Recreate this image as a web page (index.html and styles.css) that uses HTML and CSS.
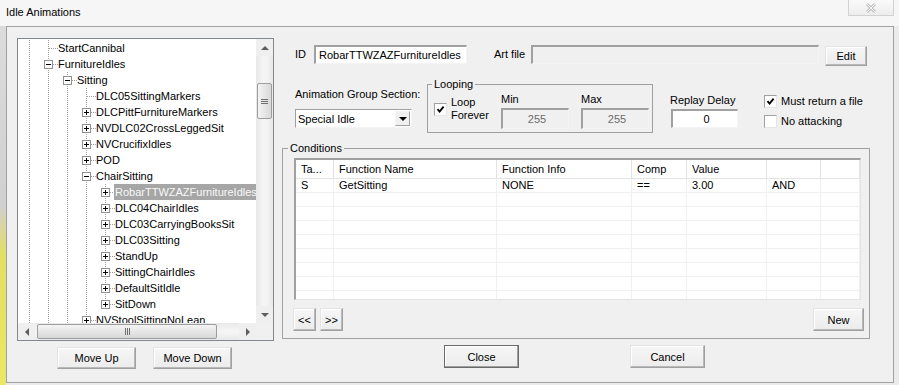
FILE: index.html
```html
<!DOCTYPE html>
<html lang="en">
<head>
    <meta charset="UTF-8">
    <title>Idle Animations</title>
    <link rel="stylesheet" href="styles.css">
</head>
<body>
    <div class="titlebar">
        <span class="title">Idle Animations</span>
        <span class="win-close">
            <svg width="12" height="10" viewBox="0 0 12 10">
                <path d="M2 1 L10 9 M10 1 L2 9" stroke="#c4c4c4" stroke-width="3" fill="none"/>
                <path d="M2 1 L10 9 M10 1 L2 9" stroke="#f6f6f6" stroke-width="1" fill="none"/>
            </svg>
        </span>
    </div>

    <div class="frame">
        <div class="left-col">
            <div class="tree">
                <div class="tree-view" id="tree">
                    <!-- tree nodes are generated below -->
                </div>
                <div class="vscroll">
                    <div class="sb-btn"><span class="arr up"></span></div>
                    <div class="sb-track">
                        <div class="thumb v-thumb"><span class="grip-v"></span></div>
                    </div>
                    <div class="sb-btn"><span class="arr down"></span></div>
                </div>
                <div class="hscroll">
                    <div class="sb-btn"><span class="arr left"></span></div>
                    <div class="sb-track">
                        <div class="thumb h-thumb"><span class="grip-h"></span></div>
                    </div>
                    <div class="sb-btn"><span class="arr right"></span></div>
                </div>
                <div class="sb-corner"></div>
            </div>
            <div class="move-row">
                <button class="btn move-btn">Move Up</button>
                <button class="btn move-btn">Move Down</button>
            </div>
        </div>

        <div class="right-col">
            <div class="id-row">
                <label class="lbl-id">ID</label>
                <input class="field id-field" type="text" value="RobarTTWZAZFurnitureIdles">
                <label class="lbl-art">Art file</label>
                <input class="field art-field" type="text" disabled>
                <button class="btn edit-btn">Edit</button>
            </div>

            <div class="opts-row">
                <div class="anim-group">
                    <div class="lbl">Animation Group Section:</div>
                    <div class="combo">
                        <span class="combo-text">Special Idle</span>
                        <span class="combo-btn"><span class="arr down black"></span></span>
                    </div>
                </div>

                <fieldset class="group looping">
                    <legend>Looping</legend>
                    <div class="loop-body">
                        <div class="loop-check">
                            <span class="check">
                                <svg width="9" height="9" viewBox="0 0 9 9"><path d="M1.5 4.2 L3.6 6.6 L7.6 1.6" fill="none" stroke="#000" stroke-width="1.8"/></svg>
                            </span>
                            <span class="lbl">Loop<br>Forever</span>
                        </div>
                        <div class="range">
                            <div class="lbl">Min</div>
                            <input class="field num-field" type="text" value="255" disabled>
                        </div>
                        <div class="range max">
                            <div class="lbl">Max</div>
                            <input class="field num-field" type="text" value="255" disabled>
                        </div>
                    </div>
                </fieldset>

                <div class="replay">
                    <div class="lbl">Replay Delay</div>
                    <input class="field replay-field" type="text" value="0">
                </div>

                <div class="flags">
                    <div class="flag">
                        <span class="check">
                            <svg width="9" height="9" viewBox="0 0 9 9"><path d="M1.5 4.2 L3.6 6.6 L7.6 1.6" fill="none" stroke="#000" stroke-width="1.8"/></svg>
                        </span>
                        Must return a file
                    </div>
                    <div class="flag">
                        <span class="check"></span>
                        No attacking
                    </div>
                </div>
            </div>

            <fieldset class="group conditions">
                <legend>Conditions</legend>
                <div class="list">
                    <div class="lv-head">
                        <span>Ta...</span>
                        <span>Function Name</span>
                        <span>Function Info</span>
                        <span>Comp</span>
                        <span>Value</span>
                        <span></span>
                        <span></span>
                    </div>
                    <div id="rows"></div>
                </div>
                <div class="list-btns">
                    <button class="btn nav-btn">&lt;&lt;</button>
                    <button class="btn nav-btn">&gt;&gt;</button>
                    <button class="btn new-btn">New</button>
                </div>
            </fieldset>

            <div class="dlg-btns">
                <button class="btn default-btn">Close</button>
                <button class="btn">Cancel</button>
            </div>
        </div>
    </div>

    <script>
        const nodes = [
            { depth: 1, name: "StartCannibal" },
            { depth: 1, name: "FurnitureIdles", box: "minus" },
            { depth: 2, name: "Sitting", box: "minus" },
            { depth: 3, name: "DLC05SittingMarkers" },
            { depth: 3, name: "DLCPittFurnitureMarkers", box: "plus" },
            { depth: 3, name: "NVDLC02CrossLeggedSit", box: "plus" },
            { depth: 3, name: "NVCrucifixIdles", box: "plus" },
            { depth: 3, name: "POD", box: "plus" },
            { depth: 3, name: "ChairSitting", box: "minus" },
            { depth: 4, name: "RobarTTWZAZFurnitureIdles", box: "plus", selected: true },
            { depth: 4, name: "DLC04ChairIdles", box: "plus" },
            { depth: 4, name: "DLC03CarryingBooksSit", box: "plus" },
            { depth: 4, name: "DLC03Sitting", box: "plus" },
            { depth: 4, name: "StandUp", box: "plus" },
            { depth: 4, name: "SittingChairIdles", box: "plus" },
            { depth: 4, name: "DefaultSitIdle", box: "plus" },
            { depth: 4, name: "SitDown", box: "plus", last: true },
            { depth: 3, name: "NVStoolSittingNoLean", box: "plus" }
        ];

        const conditions = [
            ["S", "GetSitting", "NONE", "==", "3.00", "AND", ""]
        ];

        const tree = document.getElementById("tree");
        nodes.forEach(node => {
            const row = document.createElement("div");
            row.className = "node";
            let html = "";
            for (let i = 0; i < node.depth; i++) {
                html += '<span class="guide"></span>';
            }
            html += `<span class="exp${node.last ? " last" : ""}">${node.box ? `<span class="box ${node.box}"></span>` : ""}</span>`;
            html += `<span class="node-label${node.selected ? " selected" : ""}">${node.name}</span>`;
            row.innerHTML = html;
            tree.appendChild(row);
        });

        const rows = document.getElementById("rows");
        for (let i = 0; i < 9; i++) {
            const cells = conditions[i] || ["", "", "", "", "", "", ""];
            const row = document.createElement("div");
            row.className = "lv-row";
            row.innerHTML = cells.map(c => `<span>${c}</span>`).join("");
            rows.appendChild(row);
        }
    </script>
</body>
</html>
```

FILE: styles.css
```css
/* Idle Animations dialog */
body {
    margin: 0;
    width: 899px;
    height: 385px;
    overflow: hidden;
    font-family: "Liberation Sans", Arial, sans-serif;
    font-size: 11px;
    color: #000;
    background:
        linear-gradient(to bottom, #dcdcdc 0, #d0d0d0 50%, #e2df62 64%, #ebe866 100%) 0 26px / 6px 359px no-repeat,
        #ebebeb;
}

/* title bar */
.titlebar {
    height: 26px;
    display: flex;
    justify-content: space-between;
    align-items: flex-start;
    background: #f6f6f6;
}

.title {
    padding-left: 6px;
    line-height: 24px;
}

.win-close {
    width: 46px;
    height: 16px;
    margin-right: 5px;
    box-sizing: border-box;
    border: 1px solid #d2d2d2;
    border-top: none;
    background: linear-gradient(#fafafa, #ededed);
    display: flex;
    align-items: center;
    justify-content: center;
}

/* dialog frame */
.frame {
    margin-left: 6px;
    width: 888px;
    height: 357px;
    box-sizing: border-box;
    border: 1px solid #a0a0a0;
    background: #f0f0f0;
    display: flex;
}

.left-col {
    padding: 11px 0 0 10px;
}

/* tree view */
.tree {
    width: 257px;
    height: 303px;
    box-sizing: border-box;
    border: 1px solid #828790;
    background: #fff;
    display: grid;
    grid-template-columns: 1fr 17px;
    grid-template-rows: 1fr 17px;
}

.tree-view {
    overflow: hidden;
    padding: 1px 0 0 2px;
}

.node {
    display: flex;
    height: 16px;
    line-height: 16px;
    white-space: nowrap;
}

.guide,
.exp {
    width: 19px;
    flex: none;
}

.guide {
    background: repeating-linear-gradient(to bottom, #a0a0a0 0 1px, transparent 1px 2px) 9px 0 / 1px 100% no-repeat;
}

.exp {
    background:
        repeating-linear-gradient(to right, #a0a0a0 0 1px, transparent 1px 2px) 10px 8px / 9px 1px no-repeat,
        repeating-linear-gradient(to bottom, #a0a0a0 0 1px, transparent 1px 2px) 9px 0 / 1px 100% no-repeat;
}

.exp.last {
    background-size: 9px 1px, 1px 9px;
}

.box {
    display: block;
    width: 9px;
    height: 9px;
    box-sizing: border-box;
    margin: 4px 0 0 5px;
    border: 1px solid #919191;
}

.box.minus {
    background: linear-gradient(#000, #000) center / 5px 1px no-repeat, #fff;
}

.box.plus {
    background:
        linear-gradient(#000, #000) center / 5px 1px no-repeat,
        linear-gradient(#000, #000) center / 1px 5px no-repeat,
        #fff;
}

.node-label {
    margin-left: -1px;
    padding: 0 2px 0 1px;
}

.node-label.selected {
    background: #a6a6a6;
    color: #f8f8f8;
}

/* scroll bars */
.vscroll,
.hscroll {
    display: flex;
    background: #efefef;
}

.vscroll {
    flex-direction: column;
}

.sb-btn {
    width: 17px;
    height: 17px;
    flex: none;
    display: flex;
    align-items: center;
    justify-content: center;
}

.sb-track {
    flex: 1;
    display: flex;
    background: linear-gradient(to right, #e8e8e8, #f4f4f4 40%, #f4f4f4 60%, #e8e8e8);
}

.hscroll .sb-track {
    background: linear-gradient(to bottom, #e8e8e8, #f4f4f4 40%, #f4f4f4 60%, #e8e8e8);
}

.sb-corner {
    background: #f0f0f0;
}

.thumb {
    box-sizing: border-box;
    border: 1px solid #9d9d9d;
    border-radius: 2px;
    display: flex;
    align-items: center;
    justify-content: center;
}

.v-thumb {
    width: 15px;
    height: 36px;
    margin: 27px 0 0 1px;
    background: linear-gradient(to right, #f4f4f4, #e6e6e6 50%, #d8d8d8);
}

.h-thumb {
    width: 180px;
    height: 15px;
    margin: 1px 0 0 2px;
    background: linear-gradient(to bottom, #f4f4f4, #e6e6e6 50%, #d8d8d8);
}

.grip-v {
    width: 7px;
    height: 5px;
    background: repeating-linear-gradient(to bottom, #6f6f6f 0 1px, transparent 1px 2px);
}

.grip-h {
    width: 5px;
    height: 7px;
    background: repeating-linear-gradient(to right, #6f6f6f 0 1px, transparent 1px 2px);
}

.arr {
    width: 0;
    height: 0;
    border-style: solid;
    border-color: transparent;
}

.arr.up {
    border-width: 0 4px 4px;
    border-bottom-color: #5e5e5e;
}

.arr.down {
    border-width: 4px 4px 0;
    border-top-color: #5e5e5e;
}

.arr.left {
    border-width: 4px 4px 4px 0;
    border-right-color: #5e5e5e;
}

.arr.right {
    border-width: 4px 0 4px 4px;
    border-left-color: #5e5e5e;
}

.arr.down.black {
    border-top-color: #000;
}

/* buttons */
.btn {
    font: inherit;
    color: #000;
    padding: 0;
    box-sizing: border-box;
    background: linear-gradient(#f6f6f6, #ececec);
    border: 1px solid;
    border-color: #e3e3e3 #a0a0a0 #a0a0a0 #e3e3e3;
    box-shadow: inset -1px -1px 0 #b9b9b9, inset 1px 1px 0 #fff;
    cursor: pointer;
}

.default-btn {
    border-color: #6a6a6a;
    box-shadow: inset -1px -1px 0 #a0a0a0, inset 1px 1px 0 #fff;
}

.move-row {
    display: flex;
    gap: 17px;
    margin-top: 6px;
    padding-left: 40px;
}

.move-btn {
    width: 79px;
    height: 22px;
}

/* right side */
.right-col {
    width: 588px;
    margin-left: 8px;
    padding-top: 18px;
}

.lbl {
    line-height: 13px;
    white-space: nowrap;
}

.field {
    font: inherit;
    color: #000;
    box-sizing: border-box;
    margin: 0;
    padding: 0 0 0 3px;
    background: #fff;
    border-style: solid;
    border-width: 2px 1px 1px 2px;
    border-color: #a0a0a0 #f4f4f4 #f4f4f4 #a0a0a0;
    outline: none;
}

.field:disabled {
    background: #f0f0f0;
    color: #6d6d6d;
}

.id-row {
    display: flex;
    align-items: flex-start;
    padding-left: 13px;
    line-height: 19px;
}

.lbl-id {
    width: 19px;
}

.id-field {
    width: 153px;
    height: 19px;
}

.lbl-art {
    width: 37px;
    margin-left: 27px;
}

.art-field {
    width: 288px;
    height: 19px;
}

.edit-btn {
    width: 42px;
    height: 20px;
    margin: 1px 0 0 6px;
}

.opts-row {
    display: flex;
    align-items: flex-start;
    margin-top: 12px;
    padding-left: 13px;
}

.anim-group {
    width: 117px;
    flex: none;
    padding-top: 10px;
}

.combo {
    display: flex;
    align-items: center;
    margin-top: 8px;
    height: 19px;
    box-sizing: border-box;
    border-style: solid;
    border-width: 1px;
    border-color: #a0a0a0 #f4f4f4 #f4f4f4 #a0a0a0;
    background: #fff;
}

.combo-text {
    flex: 1;
    padding-left: 2px;
}

.combo-btn {
    width: 15px;
    height: 15px;
    margin-right: 1px;
    box-sizing: border-box;
    border: 1px solid;
    border-color: #f4f4f4 #a0a0a0 #a0a0a0 #f4f4f4;
    background: #f0f0f0;
    display: flex;
    align-items: center;
    justify-content: center;
}

/* group boxes */
.group {
    margin: 0;
    padding: 0;
    min-width: 0;
    box-sizing: border-box;
    border: 1px solid #a0a0a0;
}

.group legend {
    padding: 0 2px;
    line-height: 13px;
}

.looping {
    width: 226px;
    height: 55px;
    flex: none;
    margin-left: 15px;
}

.looping legend {
    margin-left: 4px;
}

.loop-body {
    display: flex;
    align-items: flex-start;
}

.loop-check {
    width: 67px;
    margin: 5px 0 0 6px;
    display: flex;
    align-items: center;
    gap: 4px;
}

.range {
    width: 68px;
    margin-top: 2px;
}

.range.max {
    margin-left: 12px;
}

.num-field {
    width: 68px;
    height: 21px;
    margin-top: 2px;
    text-align: center;
}

.replay {
    width: 68px;
    flex: none;
    margin-left: 17px;
    padding-top: 16px;
}

.replay-field {
    width: 67px;
    height: 19px;
    margin: 2px 0 0 1px;
    text-align: center;
}

.flags {
    margin-left: 26px;
    padding-top: 13px;
    white-space: nowrap;
}

.flag {
    display: flex;
    align-items: center;
    gap: 4px;
    height: 20px;
}

.check {
    width: 13px;
    height: 13px;
    flex: none;
    box-sizing: border-box;
    border: 1px solid;
    border-color: #a0a0a0 #e6e6e6 #e6e6e6 #a0a0a0;
    background: #fff;
    display: flex;
    align-items: center;
    justify-content: center;
}

/* conditions */
.conditions {
    width: 588px;
    height: 197px;
    margin-top: 9px;
}

.conditions legend {
    margin-left: 5px;
}

.list {
    width: 567px;
    height: 142px;
    margin: 3px 0 0 11px;
    box-sizing: border-box;
    border-style: solid;
    border-width: 2px 1px 1px 2px;
    border-color: #a0a0a0 #e3e3e3 #e3e3e3 #a0a0a0;
    background: #fff;
    overflow: hidden;
}

.lv-head,
.lv-row {
    display: grid;
    grid-template-columns: 38px 163px 135px 55px 80px 54px 1fr;
}

.lv-head {
    height: 19px;
    box-sizing: border-box;
    border-bottom: 1px solid #e3e3e3;
    line-height: 18px;
}

.lv-head span {
    border-right: 1px solid #e3e3e3;
    padding-left: 5px;
    white-space: nowrap;
}

.lv-row {
    height: 14px;
    line-height: 13px;
}

.lv-row span {
    border-right: 1px solid #f0f0f0;
    border-bottom: 1px solid #f0f0f0;
    padding-left: 5px;
}

.list-btns {
    display: flex;
    gap: 4px;
    height: 23px;
    margin: 8px 5px 0 10px;
}

.nav-btn {
    width: 23px;
}

.new-btn {
    width: 51px;
    margin-left: auto;
}

.dlg-btns {
    display: flex;
    gap: 111px;
    margin-top: 6px;
    padding-left: 162px;
}

.dlg-btns .btn {
    width: 75px;
    height: 23px;
}
```
